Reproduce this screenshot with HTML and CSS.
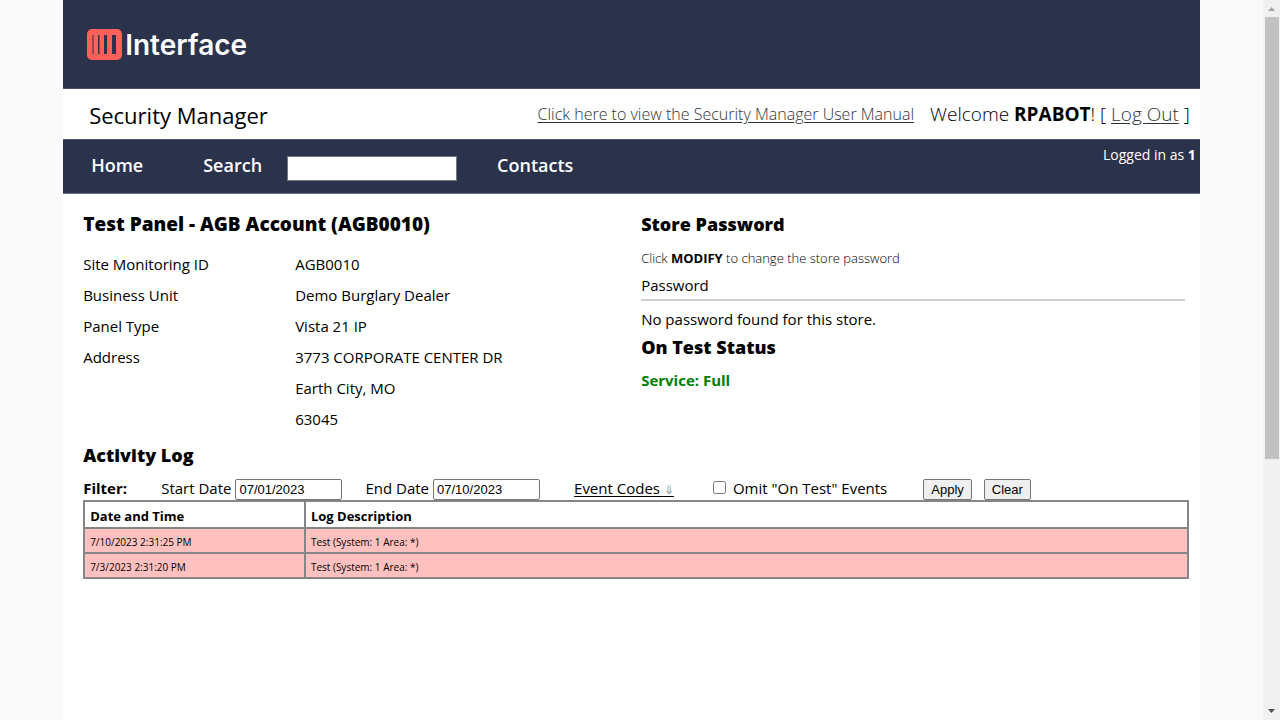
FILE: index.html
```html
<!DOCTYPE html>
<html lang="en">
<head>
<meta charset="utf-8">
<title>Security Manager</title>
<link rel="stylesheet" href="styles.css">
</head>
<body>
<div class="viewport">
  <div class="page">
    <header class="brand">
      <svg class="brand-mark" viewBox="0 0 35 31" aria-hidden="true">
        <rect width="35" height="31" rx="5" fill="#ff6057"/>
        <path d="M5.500 6h1v19h-1zM11 6h1.500v19H11zM17 6h3v19h-3zM25 6h4v19h-4z" fill="#2b324c"/>
      </svg>
      <span class="brand-name">Interface</span>
    </header>
    <div class="titlebar">
      <h1 class="app-title">Security Manager</h1>
      <a class="manual" href="#">Click here to view the Security Manager User Manual</a>
      <span class="welcome">Welcome <b>RPABOT</b>! [ <a href="#">Log Out</a> ]</span>
    </div>
    <nav class="nav">
      <a class="nav-link nav-home" href="#">Home</a>
      <label class="nav-link nav-search" for="search">Search</label>
      <input class="search-box" id="search" type="text">
      <a class="nav-link nav-contacts" href="#">Contacts</a>
      <span class="login">Logged in as <b>1</b></span>
    </nav>
    <main class="content">
      <div class="columns">
        <section class="panel">
          <h2 class="heading heading-account">Test Panel - AGB Account (AGB0010)</h2>
          <dl class="facts">
            <dt>Site Monitoring ID</dt><dd>AGB0010</dd>
            <dt>Business Unit</dt><dd>Demo Burglary Dealer</dd>
            <dt>Panel Type</dt><dd>Vista 21 IP</dd>
            <dt>Address</dt><dd>3773 CORPORATE CENTER DR</dd>
            <dd class="more">Earth City, MO</dd>
            <dd class="more">63045</dd>
          </dl>
        </section>
        <section class="store">
          <h2 class="heading">Store Password</h2>
          <p class="hint">Click <b>MODIFY</b> to change the store password</p>
          <p class="password-head">Password</p>
          <p class="empty">No password found for this store.</p>
          <h2 class="heading">On Test Status</h2>
          <p class="service">Service: Full</p>
        </section>
      </div>
      <section class="activity">
        <h2 class="heading">Activity Log</h2>
        <form class="filter">
          <b class="filter-title">Filter:</b>
          <label for="start">Start Date</label>
          <input class="date" id="start" type="text" value="07/01/2023">
          <label class="end-label" for="end">End Date</label>
          <input class="date" id="end" type="text" value="07/10/2023">
          <a class="codes" href="#">Event Codes <span class="arrow">⇓</span></a>
          <input class="omit" id="omit" type="checkbox">
          <label class="omit-label" for="omit">Omit "On Test" Events</label>
          <button class="btn" type="button">Apply</button>
          <button class="btn btn-clear" type="button">Clear</button>
        </form>
        <table class="log">
          <thead><tr><th class="when">Date and Time</th><th>Log Description</th></tr></thead>
          <tbody>
            <tr><td>7/10/2023 2:31:25 PM</td><td>Test (System: 1 Area: *)</td></tr>
            <tr><td>7/3/2023 2:31:20 PM</td><td>Test (System: 1 Area: *)</td></tr>
          </tbody>
        </table>
      </section>
    </main>
  </div>
</div>
<div class="scrollbar" aria-hidden="true">
  <svg class="scroll-arrow" viewBox="0 0 17 17"><path d="M5 11l3.500-4 3.500 4z" fill="#a3a3a3"/></svg>
  <div class="track"><div class="thumb"></div></div>
  <svg class="scroll-arrow" viewBox="0 0 17 17"><path d="M5 6l3.500 4L12 6z" fill="#505050"/></svg>
</div>
</body>
</html>
```
FILE: styles.css
```css
* { box-sizing: border-box; }
body {
  margin: 0;
  display: flex;
  min-height: 100vh;
  background: #fafafa;
  color: #000;
  font: 400 15px/20px "Open Sans", "Noto Sans", sans-serif;
}
h1, h2, p, dl, dd { margin: 0; }
b { font-weight: 700; }
a { color: #333; text-underline-offset: 2px; }

.viewport { flex: 1; }
.page { width: 90%; min-height: 100vh; margin: 0 auto; background: #fff; }

.brand {
  display: flex;
  align-items: center;
  gap: 3px;
  height: 89px;
  padding-left: 24px;
  background: #2b324c;
  border-bottom: 1px solid #4b5268;
}
.brand-mark { width: 35px; height: 31px; }
.brand-name { padding-top: 2px; color: #fff; font: 600 28px/36px Inter, "Liberation Sans", sans-serif; }

.titlebar { display: flex; align-items: center; height: 50px; padding: 0 10px 0 26px; }
.app-title { font-size: 22px; line-height: 32px; font-weight: 400; padding-top: 2px; }
.manual { margin-left: auto; font-size: 16px; font-weight: 300; }
.welcome { margin-left: 16px; font-size: 19px; line-height: 24px; font-weight: 300; }

.nav {
  display: flex;
  align-items: center;
  height: 55px;
  padding: 0 4px 0 28px;
  background: #2b324c;
  border-top: 1px solid #4b5268;
  border-bottom: 1px solid #6b7186;
  color: #fff;
}
.nav-link { padding-bottom: 3px; color: #fff; font-size: 18px; line-height: 24px; font-weight: 600; text-decoration: none; }
.nav-search { margin-left: 60px; }
.search-box { width: 170px; height: 25px; margin: 3px 0 0 25px; border: 1px solid #767676; }
.nav-contacts { margin-left: 40px; }
.login { align-self: flex-start; margin: 5px 0 0 auto; font-size: 14px; font-weight: 400; }

.content { padding: 18px 11px 20px 20px; }
.columns { display: flex; }
.panel { flex: 0 0 558px; }
.store { flex: 1; margin-right: 4px; }
.heading { font-size: 18px; line-height: 24px; font-weight: 800; }
.heading-account { font-size: 19px; }
.facts { display: grid; grid-template-columns: 212px 1fr; row-gap: 11px; margin-top: 18px; line-height: 20px; }
.more { grid-column: 2; }
.hint { margin-top: 12px; font-size: 13px; font-weight: 300; }
.password-head { margin-top: 5px; padding: 2px 0 4px; border-bottom: 2px solid #cfd0cf; }
.empty { padding: 8px 0 6px; }
.service { margin-top: 11px; color: #008000; font-weight: 700; }

.activity { margin-top: 14px; }
.filter { display: flex; align-items: center; height: 21px; margin-top: 12px; }
.filter-title, .filter label, .codes { padding-bottom: 3px; }
.filter-title { width: 78px; }
.date { width: 107px; height: 21px; margin-left: 4px; padding: 1px 3px; border: 1px solid #767676; border-radius: 2px; font: 13px/17px "Liberation Sans", sans-serif; }
.end-label { margin-left: 23px; }
.codes { margin-left: 34px; color: #000; }
.arrow { color: #8399aa; font: 12px/16px "DejaVu Sans", sans-serif; }
.omit { width: 13px; height: 13px; margin: 0 0 5px 39px; }
.omit-label { margin-left: 7px; }
.btn { height: 21px; margin-left: 36px; padding: 0 7px; border: 1px solid #767676; border-radius: 2px; background: #efefef; color: #000; font: 13px/17px "Liberation Sans", sans-serif; }
.btn-clear { margin-left: 12px; }

.log { width: 100%; border-collapse: collapse; border: 2px solid #868686; }
.log th, .log td { padding: 2px 5px 0; border: 2px solid #868686; text-align: left; }
.log th { height: 27px; font-size: 13px; line-height: 20px; font-weight: 700; }
.log td { height: 25px; font-size: 10px; line-height: 16px; background: #ffc0c0; }
.when { width: 20%; }

.scrollbar { display: flex; flex-direction: column; width: 17px; height: 100vh; background: #f0f0f0; }
.scroll-arrow { width: 17px; height: 17px; }
.track { flex: 1; padding: 0 1px 0 2px; }
.thumb { height: 64.4%; background: #c1c1c1; }
```
